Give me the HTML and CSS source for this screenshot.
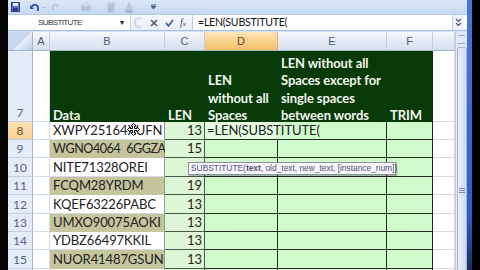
FILE: index.html
```html
<!DOCTYPE html>
<html lang="en">
<head>
  <meta charset="UTF-8" />
  <title>LEN / SUBSTITUTE</title>
  <link rel="stylesheet" href="styles.css">
</head>
<body>
  <div class="screen">
    <div class="edge-left"></div>

    <div class="app">
      <!-- quick access toolbar -->
      <div class="qat">
        <svg class="qi save" width="9" height="10" viewBox="0 0 9 10"><rect x="0.5" y="0.5" width="8" height="9" fill="#5a6fc0" stroke="#34428a"/><rect x="2" y="1" width="5" height="3" fill="#e8eef9"/><rect x="2" y="6" width="5" height="3" fill="#2d3c80"/></svg>
        <svg class="qi undo" width="10" height="9" viewBox="0 0 10 9"><path d="M2 4 C3 1 8 1 8 5 L8 8" fill="none" stroke="#3357b8" stroke-width="2"/><path d="M0 2 L4 6 L0 6 Z" fill="#3357b8"/></svg>
        <span class="qdrop">-</span>
        <svg class="qi redo" width="9" height="8" viewBox="0 0 9 8"><path d="M7 4 C6 1 2 1 2 5 L2 7" fill="none" stroke="#b7c6de" stroke-width="2"/></svg>
        <svg class="qi dim1" width="12" height="10" viewBox="0 0 12 10"><rect x="1" y="3" width="10" height="6" fill="#b5c4dc"/><rect x="3" y="0" width="6" height="4" fill="#cfdaea"/></svg>
        <svg class="qi dim2" width="10" height="11" viewBox="0 0 10 11"><rect x="1" y="0" width="8" height="11" fill="#c4d1e6"/><path d="M2 3h6M2 5h6M2 7h6M2 9h6" stroke="#9fb1cf" stroke-width="1"/></svg>
        <svg class="qi dim3" width="12" height="11" viewBox="0 0 12 11"><path d="M6 0 L11 10 L1 10 Z" fill="#b9c7de"/><rect x="3" y="8" width="6" height="3" fill="#a5b6d3"/></svg>
        <svg class="qi more" width="5" height="6" viewBox="0 0 5 6"><path d="M0 0h5M0 2 L2.5 5 L5 2Z" stroke="#4a5f86" fill="#4a5f86" stroke-width="1"/></svg>
      </div>

      <!-- formula bar -->
      <div class="formula-bar">
        <div class="name-box">
          <span class="name">SUBSTITUTE</span>
          <span class="nb-drop">▾</span>
        </div>
        <div class="fx-buttons">
          <span class="fb-circle"></span>
          <svg width="8" height="8" viewBox="0 0 8 8"><path d="M1 1 L7 7 M7 1 L1 7" stroke="#505a6e" stroke-width="1.6"/></svg>
          <svg width="9" height="8" viewBox="0 0 9 8"><path d="M1 4 L3.5 7 L8 1" fill="none" stroke="#3a5a98" stroke-width="1.6"/></svg>
          <span class="fx">f<small>x</small></span>
        </div>
        <div class="formula">=LEN(SUBSTITUTE(</div>
        <div class="expand">
          <svg width="7" height="9" viewBox="0 0 7 9"><path d="M1 1 L3.5 3.5 L6 1 M1 5 L3.5 7.5 L6 5" fill="none" stroke="#4a5570" stroke-width="1.2"/></svg>
        </div>
      </div>

      <!-- worksheet -->
      <div class="sheet">
        <div class="corner"></div>
        <div class="ch">A</div>
        <div class="ch">B</div>
        <div class="ch">C</div>
        <div class="ch sel">D</div>
        <div class="ch">E</div>
        <div class="ch">F</div>
        <div class="ch blank"></div>

        <div class="scroll">
          <div class="sc-split"></div>
          <div class="sc-thumb"><span class="grip"></span></div>
          <div class="sc-down"></div>
        </div>

        <div class="rh">7</div>
        <div class="cell"></div>
        <div class="cell hdr"><span>Data</span></div>
        <div class="cell hdr"><span>LEN</span></div>
        <div class="cell hdr"><span>LEN<br>without all<br>Spaces</span></div>
        <div class="cell hdr"><span>LEN without all<br>Spaces except for<br>single spaces<br>between words</span></div>
        <div class="cell hdr"><span>TRIM</span></div>
        <div class="cell"></div>

        <div class="rh active">8</div>
        <div class="cell"></div>
        <div class="cell txt">XWPY25164XUFN</div>
        <div class="cell num">13</div>
        <div class="cell out edit"><span class="typing">=LEN(SUBSTITUTE(</span></div>
        <div class="cell out"></div>
        <div class="cell out"></div>
        <div class="cell"></div>

        <div class="rh">9</div>
        <div class="cell"></div>
        <div class="cell txt olive tight">WGNO4064&ensp;6GGZA</div>
        <div class="cell num">15</div>
        <div class="cell out"></div>
        <div class="cell out"></div>
        <div class="cell out"></div>
        <div class="cell"></div>

        <div class="rh">10</div>
        <div class="cell"></div>
        <div class="cell txt">NITE71328OREI</div>
        <div class="cell num"></div>
        <div class="cell out"></div>
        <div class="cell out"></div>
        <div class="cell out"></div>
        <div class="cell"></div>

        <div class="rh">11</div>
        <div class="cell"></div>
        <div class="cell txt olive">FCQM28YRDM</div>
        <div class="cell num">19</div>
        <div class="cell out"></div>
        <div class="cell out"></div>
        <div class="cell out"></div>
        <div class="cell"></div>

        <div class="rh">12</div>
        <div class="cell"></div>
        <div class="cell txt">KQEF63226PABC</div>
        <div class="cell num">13</div>
        <div class="cell out"></div>
        <div class="cell out"></div>
        <div class="cell out"></div>
        <div class="cell"></div>

        <div class="rh">13</div>
        <div class="cell"></div>
        <div class="cell txt olive">UMXO90075AOKI</div>
        <div class="cell num">13</div>
        <div class="cell out"></div>
        <div class="cell out"></div>
        <div class="cell out"></div>
        <div class="cell"></div>

        <div class="rh">14</div>
        <div class="cell"></div>
        <div class="cell txt">YDBZ66497KKIL</div>
        <div class="cell num">13</div>
        <div class="cell out"></div>
        <div class="cell out"></div>
        <div class="cell out"></div>
        <div class="cell"></div>

        <div class="rh">15</div>
        <div class="cell"></div>
        <div class="cell txt olive">NUOR41487GSUN</div>
        <div class="cell num">13</div>
        <div class="cell out"></div>
        <div class="cell out"></div>
        <div class="cell out"></div>
        <div class="cell"></div>

        <div class="rh"></div>
        <div class="cell"></div>
        <div class="cell txt"></div>
        <div class="cell num"></div>
        <div class="cell out"></div>
        <div class="cell out"></div>
        <div class="cell out"></div>
        <div class="cell"></div>

        <!-- overlays -->
        <div class="tip">SUBSTITUTE(<b>text</b>, old_text, new_text, [instance_num])</div>
        <svg class="move-cursor" width="13" height="13" viewBox="0 0 13 13">
          <path d="M6.5 0.5 L9 3 L7.5 3 L7.5 5.5 L10 5.5 L10 4 L12.5 6.5 L10 9 L10 7.5 L7.5 7.5 L7.5 10 L9 10 L6.5 12.5 L4 10 L5.5 10 L5.5 7.5 L3 7.5 L3 9 L0.5 6.5 L3 4 L3 5.5 L5.5 5.5 L5.5 3 L4 3 Z" fill="#fff" stroke="#000" stroke-width="1"/>
        </svg>
      </div>
    </div>

    <div class="edge-right"><div class="task"></div></div>
  </div>
</body>
</html>
```

FILE: styles.css
```css
* {
  box-sizing: border-box;
}

body {
  margin: 0;
  background: #000;
  font-family: Lato, "Liberation Sans", sans-serif;
}

.screen {
  display: flex;
  width: 480px;
  height: 270px;
  overflow: hidden;
}

.edge-left {
  width: 8px;
  background: #040404;
}

.edge-right {
  width: 13px;
  display: flex;
}

.task {
  width: 5px;
  background: linear-gradient(#4a78d8, #2f5fc6 80%, #1b2e60);
}

.app {
  width: 459px;
  display: flex;
  flex-direction: column;
  background: #d6e3f4;
}

/* quick access toolbar */
.qat {
  height: 14px;
  display: flex;
  align-items: center;
  padding-left: 3px;
  background: linear-gradient(#dbe7f8, #c5d8f1);
}

.qi { display: block; }
.undo { margin-left: 10px; }
.qdrop { font-size: 8px; color: #7c8fb4; margin: 0 4px 0 2px; }
.redo { margin-left: 2px; }
.dim1 { margin-left: 20px; }
.dim2 { margin-left: 14px; }
.dim3 { margin-left: 7px; }
.more { margin-left: 16px; }

/* formula bar */
.formula-bar {
  height: 17px;
  display: flex;
  background: #fff;
  border-top: 1px solid #b7cae6;
  border-bottom: 1px solid #a9bfdf;
  margin-bottom: 1px;
}

.name-box {
  width: 120px;
  flex-shrink: 0;
  margin-left: 2px;
  display: flex;
  align-items: center;
  padding-left: 28px;
  position: relative;
  font-family: "Liberation Sans", sans-serif;
}

.name {
  font-size: 8px;
  color: #2e3440;
  letter-spacing: -0.6px;
}

.nb-drop {
  position: absolute;
  right: 6px;
  font-size: 8px;
  color: #222;
}

.fx-buttons {
  width: 62px;
  flex-shrink: 0;
  display: flex;
  align-items: center;
  gap: 7px;
  padding-left: 3px;
  background: linear-gradient(#f6f8fc, #e9eef7);
  border-left: 1px solid #c9d6ea;
}

.fb-circle {
  width: 9px;
  height: 11px;
  border-radius: 50%;
  border: 2px solid #cad6ea;
  border-right-color: transparent;
}

.fx {
  font-family: "Liberation Serif", serif;
  font-style: italic;
  font-size: 10px;
  color: #444;
  margin-left: -1px;
}

.fx small { font-size: 7px; }

.formula {
  flex: 1;
  border-left: 1px solid #b7cae6;
  padding-left: 5px;
  font-size: 10.5px;
  letter-spacing: -0.2px;
  line-height: 15px;
  color: #111;
}

.expand {
  width: 12px;
  display: flex;
  align-items: center;
  justify-content: center;
  border-left: 1px solid #c4d2e8;
  background: #eef2f9;
  margin-right: 3px;
}

/* worksheet grid */
.sheet {
  position: relative;
  flex: 1;
  display: grid;
  grid-template-columns: 25px 17px 115px 40px 73px 109px 46px 22px 12px;
  grid-template-rows: 19px 71px 18px repeat(8, 18.4px);
  background: #fff;
  overflow: hidden;
}

.corner {
  background: linear-gradient(135deg, #c7d8ef 55%, #e9f0fa 56%, #b9cce8);
  border-right: 1px solid #9eb6ce;
  border-bottom: 1px solid #9eb6ce;
}

.ch {
  display: flex;
  align-items: center;
  justify-content: center;
  font-family: "Liberation Sans", sans-serif;
  font-size: 11px;
  color: #4b5c78;
  background: linear-gradient(#f7f9fd, #e3e9f3 55%, #d9e1ee);
  border-right: 1px solid #c3cfe0;
  border-bottom: 1px solid #9eb6ce;
}

.ch.sel {
  background: linear-gradient(#fde7bd, #f9cf86 55%, #f6c06a);
  color: #5b4a2e;
  border-right-color: #e2b36a;
}

.scroll {
  grid-column: 9;
  grid-row: 1 / -1;
  display: flex;
  flex-direction: column;
  background: #e2e8f4;
  border-left: 1px solid #c3cde0;
}

.sc-split {
  height: 9px;
  margin-top: 3px;
  border-top: 1px solid #9aa9c6;
  border-bottom: 1px solid #9aa9c6;
  margin-left: 2px;
  margin-right: 2px;
}

.sc-thumb {
  flex: 1;
  margin: 3px 0 0 1px;
  border: 1px solid #a9b6d2;
  border-radius: 2px;
  background: linear-gradient(90deg, #e9edf8, #d2daee);
  display: flex;
  justify-content: center;
  padding-top: 140px;
}

.grip {
  width: 6px;
  height: 5px;
  border-top: 1px solid #7d8db0;
  border-bottom: 1px solid #7d8db0;
  background: linear-gradient(#7d8db0, #7d8db0) center / 6px 1px no-repeat;
}

.sc-down {
  height: 16px;
  background: linear-gradient(#9fb1d6, #7089bb);
}

.rh {
  display: flex;
  align-items: flex-end;
  justify-content: center;
  padding-bottom: 1px;
  font-size: 12px;
  color: #4f6487;
  background: #e5ecf7;
  border-right: 1px solid #9eb6ce;
  border-bottom: 1px solid #c3cfe0;
}

.rh.active {
  background: linear-gradient(#fbe2b4, #f8d196);
  color: #6b5430;
}

.cell {
  display: flex;
  align-items: flex-end;
  padding: 0 2px 0 3px;
  white-space: nowrap;
  font-size: 13px;
  letter-spacing: -0.1px;
  line-height: 17px;
  color: #222;
  border-right: 1px solid #d4dae6;
  border-bottom: 1px solid #d4dae6;
}

.cell.hdr {
  background: #073a07;
  border-color: #073a07;
  color: #f2f6ef;
  font-weight: 700;
  line-height: 17.6px;
}

.cell.hdr span {
  margin-bottom: -4px;
}

.cell.txt {
  border-right-color: #8f9b8f;
}

.cell.tight {
  font-size: 12.5px;
  letter-spacing: -0.4px;
}

.cell.olive {
  background: #c4c59d;
  border-bottom-color: #c4c59d;
}

.cell.num {
  justify-content: flex-end;
  background: #dcf6d6;
  border-color: #4b564b;
  padding-right: 2px;
}

.cell.out {
  background: #d0f9cc;
  border-right-color: #1d2a1d;
  border-bottom-color: #1d2a1d;
}

.cell.edit {
  background: #e4fbe0;
  border-right-color: #e4fbe0;
  padding-left: 2px;
}

.typing {
  position: relative;
  z-index: 1;
}

/* overlays */
.tip {
  position: absolute;
  left: 180px;
  top: 130px;
  width: 208px;
  height: 13px;
  padding-left: 2px;
  font-family: "Liberation Sans", sans-serif;
  font-size: 8.4px;
  line-height: 11px;
  color: #50507a;
  white-space: nowrap;
  background: #f6f6fb;
  border: 1px solid #8e8ea6;
  box-shadow: 1px 1px 1px rgba(0, 0, 0, 0.25);
}

.move-cursor {
  position: absolute;
  left: 119px;
  top: 91px;
}
```
